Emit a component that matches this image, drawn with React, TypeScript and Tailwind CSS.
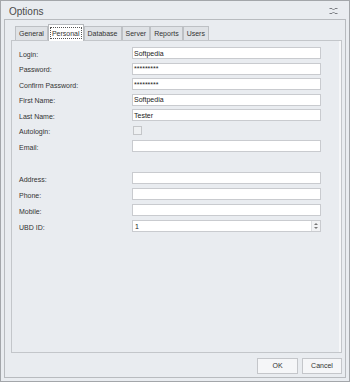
import React from "react";

const FONT = { fontFamily: '"Liberation Sans", Arial, sans-serif' };

function CloseGlyph() {
  return (
    <svg width="9" height="8" viewBox="0 0 9 8" aria-hidden="true">
      <path
        d="M1 1.5h2l1.5 1.5L6 1.5h2M1 6.5h2l1.5-1.5L6 6.5h2M1 1v1M8 1v1M1 6v1M8 6v1"
        fill="none"
        stroke="#7a7d82"
        strokeWidth="1"
      />
    </svg>
  );
}

function Field({ value }: { value?: string }) {
  return (
    <div className="flex h-[12px] w-[189px] items-center border border-[#c9cbcf] bg-white pl-[1px] text-[7px] leading-none text-[#222]">
      {value}
    </div>
  );
}

function Row({ label, children }: { label: string; children: React.ReactNode }) {
  return (
    <div className="flex h-[12px] items-center">
      <div className="w-[113px] pt-[2px] text-[7px] leading-none text-[#333]">{label}</div>
      {children}
    </div>
  );
}

const TABS = ["General", "Personal", "Database", "Server", "Reports", "Users"];

export default function App() {
  return (
    <div
      className="flex h-[382px] w-[350px] flex-col border border-[#a3a6aa] bg-[#e9ecf0]"
      style={FONT}
    >
      <div className="flex h-[18px] items-center justify-between pl-[8px] pr-[11px] pt-[2px]">
        <span className="text-[10px] text-[#4a4a4a]">Options</span>
        <CloseGlyph />
      </div>

      <div className="mx-[3px] mb-[3px] flex flex-1 flex-col border border-[#b8bbbf] pl-[6px] pr-[3px] pt-[4px]">
        <div className="flex h-[16px] items-end pl-[4px]">
          {TABS.map((t) =>
            t === "Personal" ? (
              <div
                key={t}
                className="z-10 -mb-[1px] flex h-[17px] items-center border border-b-0 border-[#b6b9bd] bg-white px-[1px] text-[7px] text-[#333]"
              >
                <span className="border border-dotted border-[#555] px-[1px] pt-[1px] leading-[9px]">
                  {t}
                </span>
              </div>
            ) : (
              <div
                key={t}
                className="flex h-[14px] items-center border border-b-0 border-[#bdc0c4] bg-[#dfe2e6] px-[3px] pt-[1px] text-[7px] text-[#333]"
              >
                {t}
              </div>
            ),
          )}
        </div>

        <div className="h-[313px] border border-[#c3c6ca] bg-[#e9ecf0] pl-[7px] pt-[6px] shadow-[inset_-2px_0_0_#f6f7f9]">
          <div className="flex flex-col gap-[3.5px]">
            <Row label="Login:">
              <Field value="Softpedia" />
            </Row>
            <Row label="Password:">
              <Field value="*********" />
            </Row>
            <Row label="Confirm Password:">
              <Field value="*********" />
            </Row>
            <Row label="First Name:">
              <Field value="Softpedia" />
            </Row>
            <Row label="Last Name:">
              <Field value="Tester" />
            </Row>
            <Row label="Autologin:">
              <div className="ml-[1px] h-[9px] w-[9px] border border-[#c4c6c9] bg-[#eef0f2]" />
            </Row>
            <Row label="Email:">
              <Field />
            </Row>
          </div>

          <div className="mt-[20px] flex flex-col gap-[4px]">
            <Row label="Address:">
              <Field />
            </Row>
            <Row label="Phone:">
              <Field />
            </Row>
            <Row label="Mobile:">
              <Field />
            </Row>
            <Row label="UBD ID:">
              <div className="flex h-[12px] w-[189px] items-stretch border border-[#c9cbcf] bg-white text-[7px] leading-none text-[#222]">
                <div className="flex flex-1 items-center pl-[2px]">1</div>
                <div className="flex w-[9px] flex-col items-center justify-center gap-[2px] border-l border-[#dcdee1] bg-[#f2f3f5]">
                  <div className="h-0 w-0 border-x-[2px] border-b-[2px] border-x-transparent border-b-[#777]" />
                  <div className="h-0 w-0 border-x-[2px] border-t-[2px] border-x-transparent border-t-[#777]" />
                </div>
              </div>
            </Row>
          </div>
        </div>

        <div className="mt-[5px] flex justify-end gap-[4px]">
          <button
            type="button"
            className="flex h-[16px] w-[41px] items-center justify-center border border-[#c4c6ca] bg-[#f5f6f8] text-[7px] text-[#333]"
          >
            OK
          </button>
          <button
            type="button"
            className="flex h-[16px] w-[40px] items-center justify-center border border-[#c4c6ca] bg-[#f5f6f8] text-[7px] text-[#333]"
          >
            Cancel
          </button>
        </div>
      </div>
    </div>
  );
}
